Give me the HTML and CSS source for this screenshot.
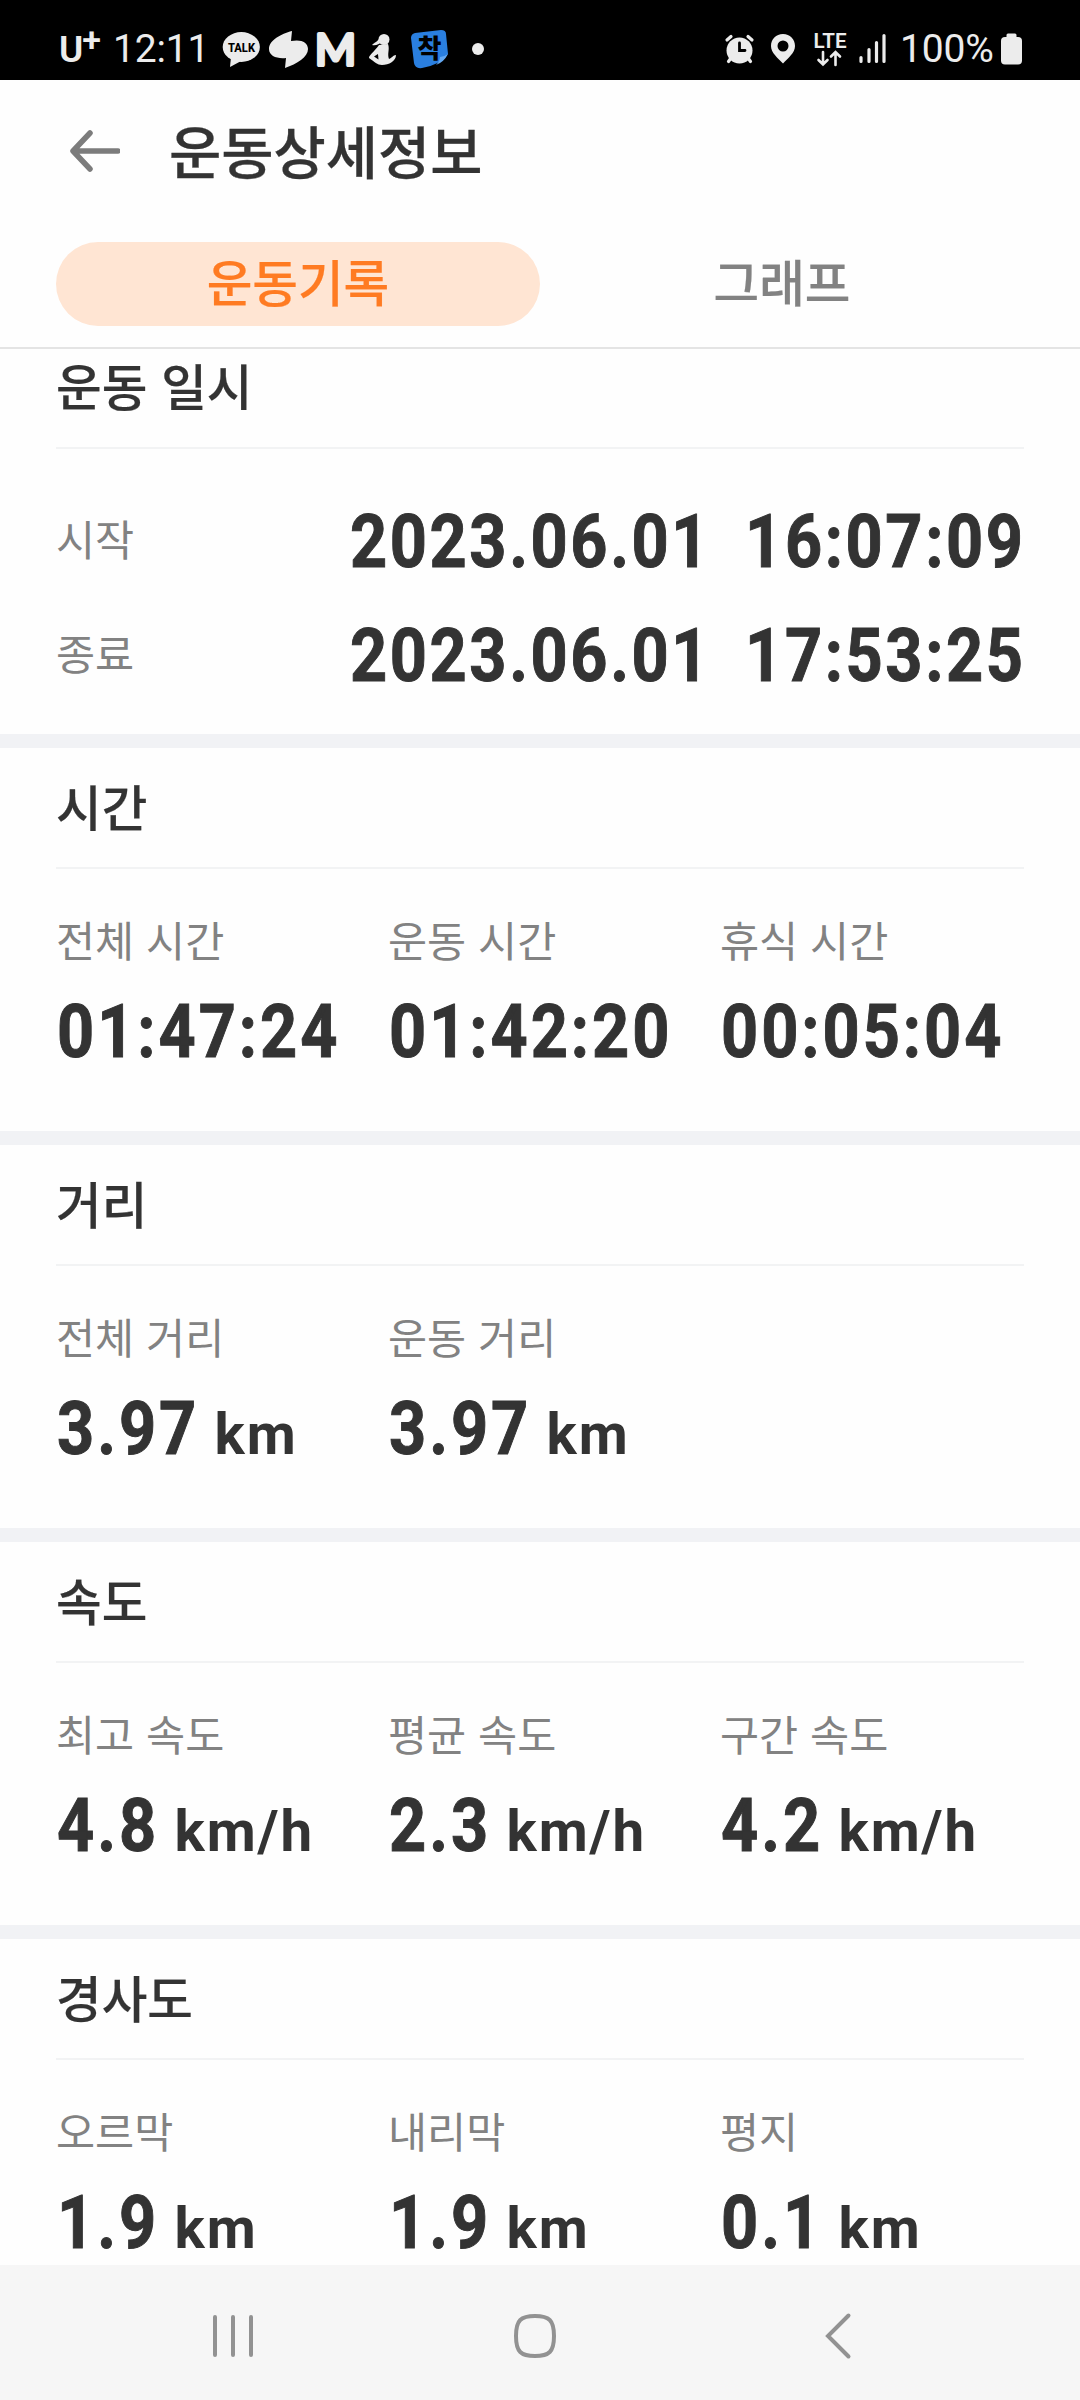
FILE: index.html
```html
<!DOCTYPE html>
<html lang="ko">
<head>
    <meta charset="UTF-8">
    <meta name="viewport" content="width=device-width, initial-scale=1.0">
    <title>운동상세정보</title>
    <link rel="stylesheet" href="styles.css">
</head>
<body>
    <div class="screen">
        <!-- Status bar -->
        <div class="status-bar">
            <div class="status-left">
                <span class="carrier">U<span class="carrier-plus">+</span></span>
                <span class="clock">12:11</span>
                <svg width="44" height="80" viewBox="219 0 44 80">
                    <ellipse cx="241.3" cy="47" rx="18.6" ry="15"/>
                    <path d="M231 57 L230 67 L243 60 Z"/>
                    <text class="talk-text" x="241.5" y="52" textLength="27" lengthAdjust="spacingAndGlyphs">TALK</text>
                </svg>
                <svg width="49" height="80" viewBox="263 0 49 80">
                    <path d="M292 31 C281 34 269 40 269 49 C269 56 277 59 286 58 L285 68 C297 64 308 57 308 49 C308 42 301 39 291 41 Z"/>
                </svg>
                <svg width="50" height="80" viewBox="312 0 50 80">
                    <text class="m-text" x="335.5" y="64.5" textLength="41" lengthAdjust="spacingAndGlyphs">M</text>
                </svg>
                <svg width="42" height="80" viewBox="362 0 42 80">
                    <circle cx="384" cy="39.5" r="5.5"/>
                    <path d="M380 38 C377 42 375 42 372 45 C376 46 379 44 382 42 Z"/>
                    <path d="M379 45 L388 44 C390 50 387 53 389 59 C392 58 393 55 396 55 C396 61 389 65 382 65 C377 65 375 62 369 58 C369 55 374 52 379 45 Z"/>
                    <path class="cut" d="M374 56.500 L378 54 L378.500 59.500 Z"/>
                </svg>
                <svg width="52" height="80" viewBox="404 0 52 80">
                    <path class="badge-blue" d="M415 33 L441 30 Q446 30 446 34 L448 54 Q440 65 422 68 Q415 69 414 63 L411 38 Q411 34 415 33 Z"/>
                    <path class="badge-fold" d="M448 54 Q444 62 436 65 Q440 61 440 57 Q444 57 448 54 Z"/>
                    <text class="badge-text" x="429.500" y="58">착</text>
                </svg>
                <svg width="44" height="80" viewBox="456 0 44 80">
                    <circle cx="478" cy="49" r="6"/>
                </svg>
            </div>
            <div class="status-right">
                <svg width="38" height="80" viewBox="720 0 38 80">
                    <circle cx="739.500" cy="50.500" r="13"/>
                    <path class="line" d="M727 40 L731 36.500 M752 40 L748 36.500 M731 58 L728.500 61.500 M748 58 L750.500 61.500"/>
                    <path class="hand" d="M739.500 43 V50.500 H745"/>
                </svg>
                <svg width="52" height="80" viewBox="758 0 52 80">
                    <path fill-rule="evenodd" d="M783 34 C776 34 771 39 771 46 C771 53 778 58 783 63.500 C788 58 795 53 795 46 C795 39 790 34 783 34 Z M783 40.500 A5.500 5.500 0 1 1 783 51.500 A5.500 5.500 0 1 1 783 40.500 Z"/>
                </svg>
                <svg width="44" height="80" viewBox="810 0 44 80">
                    <text class="lte-text" x="830" y="47.500" textLength="33" lengthAdjust="spacingAndGlyphs">LTE</text>
                    <path class="arrow" d="M823 52 V64 M818.500 60 L823 64.500 L827.500 60 M835.500 65 V52.500 M831 56.500 L835.500 52 L840 56.500"/>
                </svg>
                <svg width="46" height="80" viewBox="854 0 46 80">
                    <path class="signal" d="M861 57.500 V61.500 M869 49.500 V61.500 M876.500 42.500 V61.500 M884 35.500 V61.500"/>
                </svg>
                <span class="percent">100%</span>
                <svg width="30" height="80" viewBox="996 0 30 80">
                    <rect x="1006.500" y="33.500" width="10" height="6" rx="1.500"/>
                    <rect x="1001" y="37" width="21" height="27.500" rx="4"/>
                </svg>
            </div>
        </div>

        <!-- Title and tabs -->
        <header>
            <div class="title-bar">
                <svg class="back" width="50" height="46" viewBox="0 0 50 46">
                    <path d="M48 23 H4 M20 5 L3 23 L20 41"/>
                </svg>
                <h1>운동상세정보</h1>
            </div>
            <div class="tabs">
                <div class="tab active">운동기록</div>
                <div class="tab">그래프</div>
            </div>
        </header>

        <main>
            <section class="first">
                <h2>운동 일시</h2>
                <div class="date-row">
                    <span class="label">시작</span>
                    <span class="value date"><span>2023.06.01</span><span>16:07:09</span></span>
                </div>
                <div class="date-row">
                    <span class="label">종료</span>
                    <span class="value date"><span>2023.06.01</span><span>17:53:25</span></span>
                </div>
            </section>

            <section>
                <h2>시간</h2>
                <div class="stats">
                    <div><div class="label">전체 시간</div><div class="value">01:47:24</div></div>
                    <div><div class="label">운동 시간</div><div class="value">01:42:20</div></div>
                    <div><div class="label">휴식 시간</div><div class="value">00:05:04</div></div>
                </div>
            </section>

            <section>
                <h2>거리</h2>
                <div class="stats">
                    <div><div class="label">전체 거리</div><div class="value">3.97<span class="unit">km</span></div></div>
                    <div><div class="label">운동 거리</div><div class="value">3.97<span class="unit">km</span></div></div>
                </div>
            </section>

            <section>
                <h2>속도</h2>
                <div class="stats">
                    <div><div class="label">최고 속도</div><div class="value">4.8<span class="unit">km/h</span></div></div>
                    <div><div class="label">평균 속도</div><div class="value">2.3<span class="unit">km/h</span></div></div>
                    <div><div class="label">구간 속도</div><div class="value">4.2<span class="unit">km/h</span></div></div>
                </div>
            </section>

            <section>
                <h2>경사도</h2>
                <div class="stats">
                    <div><div class="label">오르막</div><div class="value">1.9<span class="unit">km</span></div></div>
                    <div><div class="label">내리막</div><div class="value">1.9<span class="unit">km</span></div></div>
                    <div><div class="label">평지</div><div class="value">0.1<span class="unit">km</span></div></div>
                </div>
            </section>
        </main>

        <!-- Android navigation -->
        <nav>
            <svg width="46" height="50" viewBox="0 0 46 50"><path d="M5 6 V44 M23 6 V44 M41 6 V44"/></svg>
            <svg width="50" height="50" viewBox="0 0 50 50"><path d="M25 5 C39 5 44 9 44 25 C44 41 39 45 25 45 C11 45 6 41 6 25 C6 9 11 5 25 5 Z"/></svg>
            <svg width="46" height="50" viewBox="0 0 46 50"><path d="M34.500 4.500 L14 25 L34.500 45.500"/></svg>
        </nav>
    </div>
</body>
</html>
```
FILE: styles.css
```css
:root {
    --text-color: #333333;
    --gray: #828282;
    --orange: #ff7b22;
    --status-color: #ececec;
}

* {
    box-sizing: border-box;
}

body {
    font-family: "Noto Sans CJK KR", sans-serif;
    margin: 0;
    background-color: #fefefe;
    color: var(--text-color);
}

.screen {
    width: 1080px;
    height: 2400px;
    display: flex;
    flex-direction: column;
    overflow: hidden;
}

.status-bar {
    height: 80px;
    flex: none;
    display: flex;
    justify-content: space-between;
    background-color: #000;
    color: var(--status-color);
    font-family: Roboto, sans-serif;
    padding: 0 54px 0 59px;
}

.status-left,
.status-right {
    display: flex;
}

.status-bar svg {
    flex: none;
    fill: var(--status-color);
}

.carrier {
    width: 54px;
    font-size: 37px;
    font-weight: 600;
    line-height: 100px;
    white-space: nowrap;
}

.carrier-plus {
    font-size: 34px;
    vertical-align: 11px;
    line-height: 1;
    margin-left: -1px;
}

.clock {
    width: 106px;
    font-size: 39px;
    line-height: 98px;
    letter-spacing: -0.2px;
    white-space: nowrap;
}

.percent {
    width: 96px;
    font-size: 39px;
    line-height: 98px;
    letter-spacing: -0.2px;
}

.talk-text {
    font-size: 13px;
    font-weight: 800;
    fill: #000;
    text-anchor: middle;
}

.m-text {
    font-family: Lato, sans-serif;
    font-size: 43px;
    font-weight: 400;
    text-anchor: middle;
    stroke: var(--status-color);
    stroke-width: 4;
    stroke-linejoin: round;
}

.badge-text {
    font-family: "Noto Sans CJK KR", sans-serif;
    font-size: 26px;
    font-weight: 900;
    fill: #000;
    text-anchor: middle;
}

.lte-text {
    font-size: 20px;
    font-weight: 600;
    text-anchor: middle;
}

.badge-blue {
    fill: #2a7fe0;
}

.badge-fold {
    fill: #63a8f2;
}

.cut {
    fill: #000;
}

.line,
.arrow,
.signal,
.hand {
    fill: none;
    stroke: var(--status-color);
    stroke-width: 3.2;
    stroke-linecap: round;
}

.arrow {
    stroke-width: 2.6;
}

.hand {
    stroke: #000;
    stroke-width: 2.8;
}

header {
    height: 269px;
    flex: none;
    border-bottom: 2px solid #e4e4e4;
}

.title-bar {
    height: 162px;
    display: flex;
    align-items: flex-start;
    padding-left: 70px;
}

.back {
    margin-top: 48px;
    margin-right: 49px;
    fill: none;
    stroke: #7c7c7c;
    stroke-width: 5.5;
    stroke-linecap: round;
    stroke-linejoin: round;
}

h1 {
    margin: 0;
    font-size: 56.8px;
    font-weight: 500;
    line-height: 139px;
    -webkit-text-stroke: 0.3px;
}

.tabs {
    display: flex;
    padding: 0 56px;
}

.tab {
    flex: 1;
    height: 84px;
    border-radius: 42px;
    font-size: 49.6px;
    font-weight: 500;
    line-height: 77px;
    text-align: center;
    color: var(--gray);
    -webkit-text-stroke: 0.2px;
}

.tab.active {
    background-color: #ffe5d3;
    color: var(--orange);
}

main {
    flex: 1;
    min-height: 0;
    overflow: hidden;
}

section {
    height: 397px;
    padding: 0 56px;
    border-top: 14px solid #f1f2f5;
}

section.first {
    height: 385px;
    border-top: none;
}

h2 {
    margin: 0;
    height: 121px;
    font-size: 49.6px;
    font-weight: 500;
    line-height: 114px;
    border-bottom: 2px solid #f2f3f4;
    -webkit-text-stroke: 0.2px;
}

.first h2 {
    height: 100px;
    line-height: 71px;
    margin-bottom: 36px;
}

.date-row {
    height: 114px;
    display: flex;
    justify-content: space-between;
}

.date-row .label {
    line-height: 105px;
}

.date-row .value {
    line-height: 114px;
}

.label {
    font-size: 42.5px;
    line-height: 60px;
    color: var(--gray);
}

.stats {
    display: grid;
    grid-template-columns: repeat(3, minmax(0, 1fr));
    column-gap: 28px;
    padding-top: 40px;
}

/* digits are squeezed to get a narrow, DIN-like shape */
.value {
    margin-top: 11px;
    margin-left: 1px;
    font-family: Roboto, sans-serif;
    font-size: 74.5px;
    font-weight: 700;
    line-height: 104px;
    letter-spacing: 3.4px;
    white-space: nowrap;
    transform: scaleX(0.87);
    transform-origin: left;
    -webkit-text-stroke: 1px;
}

.value.date {
    display: flex;
    gap: 39px;
    margin-top: 0;
    margin-right: -2px;
    letter-spacing: 3px;
    transform-origin: right;
}

.unit {
    display: inline-block;
    font-size: 57px;
    line-height: 1;
    margin-left: 18px;
    letter-spacing: 2px;
    transform: scaleX(1.14);
    transform-origin: left;
    -webkit-text-stroke: 0;
}

nav {
    height: 135px;
    flex: none;
    display: flex;
    justify-content: space-between;
    align-items: center;
    padding: 6px 220px 0 210px;
    background-color: #f6f6f6;
}

nav svg {
    fill: none;
    stroke: #929292;
    stroke-width: 4;
    stroke-linecap: round;
}
```
